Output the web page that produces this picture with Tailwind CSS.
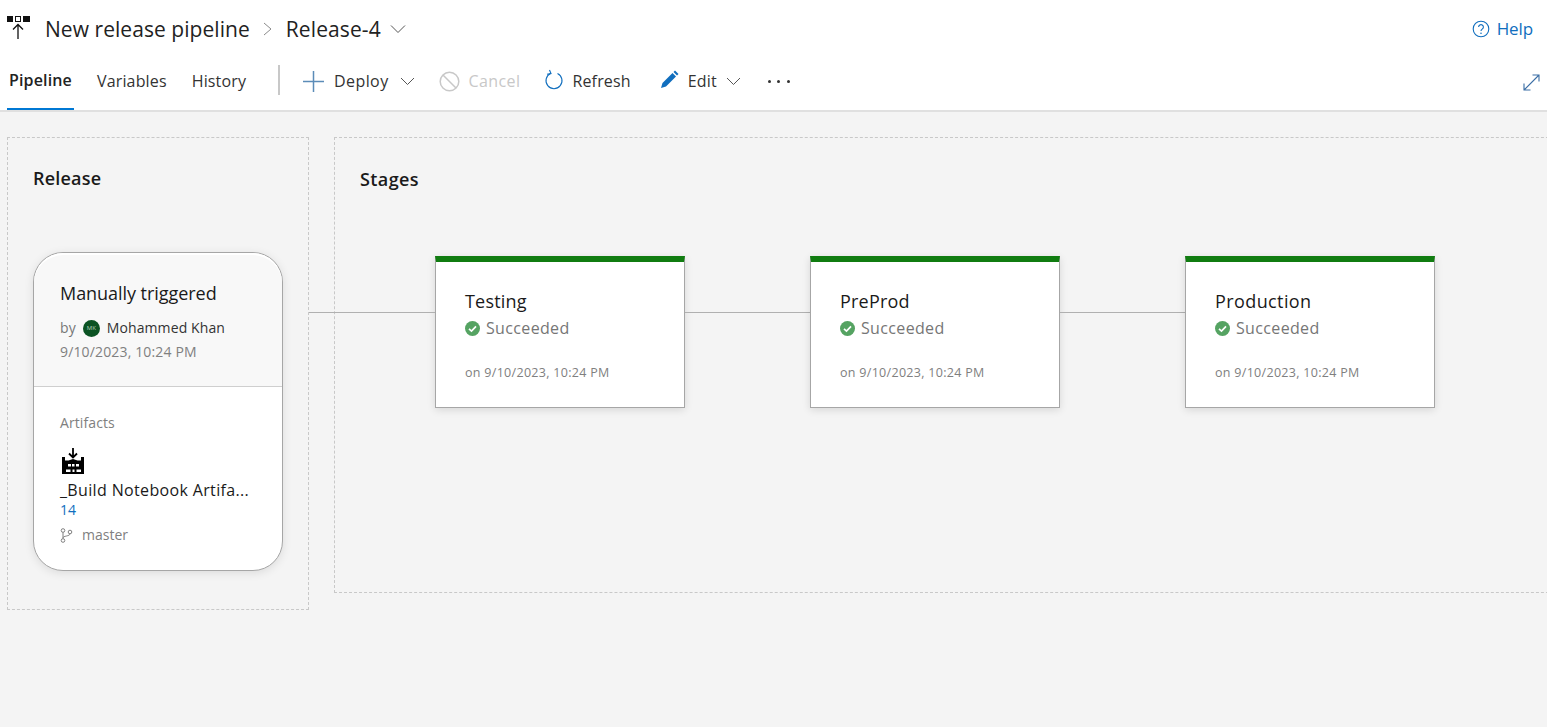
<!DOCTYPE html>
<html lang="en">
<head>
    <meta charset="UTF-8">
    <title>New release pipeline - Release-4</title>
    <script src="https://cdn.jsdelivr.net/npm/@tailwindcss/browser@4"></script>
</head>
<body class="h-[727px] w-[1547px] overflow-hidden bg-[#f4f4f4] font-['Open_Sans',sans-serif] text-[#1f1f1f]">

<!-- Header -->
<header class="h-[112px] bg-white border-b-2 border-[#e0e0e0] flex flex-col">
    <div class="h-[58px] flex items-center pl-[7px] pr-[14px]">
        <svg class="w-[24px] h-[26px] mr-[14px] -mt-[3px]" viewBox="0 0 24 26">
            <rect x="0" y="1" width="6" height="6" fill="#111"/>
            <rect x="8.5" y="1.5" width="5" height="5" fill="none" stroke="#111"/>
            <rect x="16" y="1" width="7" height="6" fill="#111"/>
            <path d="M11 24V10M6 14.5l5-5 5 5" fill="none" stroke="#111" stroke-width="1.3"/>
        </svg>
        <span class="mt-[2px] text-[21px] tracking-[0.05px] text-[#222]">New release pipeline</span>
        <svg class="w-[12px] h-[14px] ml-[12px] mr-[12px]" viewBox="0 0 12 14"><path d="M2 1l7 6-7 6" fill="none" stroke="#8a8a8a" stroke-width="1"/></svg>
        <span class="mt-[2px] text-[21px] tracking-[0.1px] text-[#222]">Release-4</span>
        <svg class="w-[16px] h-[10px] ml-[9px]" viewBox="0 0 16 10"><path d="M1 1.5l7 7 7-7" fill="none" stroke="#555" stroke-width="1"/></svg>
        <div class="ml-auto flex items-center gap-[7px] text-[#106ebe]">
            <svg class="w-[18px] h-[18px]" viewBox="0 0 18 18">
                <circle cx="9" cy="9" r="7.8" fill="none" stroke="#106ebe" stroke-width="1.1"/>
                <path d="M6.6 7a2.4 2.4 0 1 1 3.6 2.1c-.8.5-1.2.9-1.2 1.9" fill="none" stroke="#106ebe" stroke-width="1.1"/>
                <circle cx="9" cy="13.2" r=".8" fill="#106ebe"/>
            </svg>
            <span class="text-[17px] tracking-[-0.1px]">Help</span>
        </div>
    </div>
    <div class="flex-1 flex items-stretch pl-[7px] pr-[7px] text-[16px]">
        <a class="w-[67px] pb-[6px] flex items-center justify-center font-semibold tracking-[0.15px] border-b-2 border-[#0078d4] text-[#222]">Pipeline</a>
        <a class="ml-[23px] pb-[6px] flex items-center tracking-[0.15px] text-[#333]">Variables</a>
        <a class="ml-[25px] pb-[6px] flex items-center tracking-[0.15px] text-[#333]">History</a>
        <div class="ml-[32px] w-[2px] h-[30px] mt-[7px] bg-[#c8c8c8]"></div>
        <button class="ml-[23px] pb-[6px] flex items-center tracking-[0.4px] text-[#333]">
            <svg class="w-[21px] h-[21px] mr-[10px]" viewBox="0 0 21 21"><path d="M10.5 0v21M0 10.5h21" stroke="#5b8cb8" stroke-width="1.5" fill="none"/></svg>
            Deploy
            <svg class="w-[15px] h-[9px] ml-[11px]" viewBox="0 0 15 9"><path d="M1 1l6.500 6.500L14 1" fill="none" stroke="#555" stroke-width="1"/></svg>
        </button>
        <button class="ml-[24px] pb-[6px] flex items-center tracking-[0.4px] text-[#c8c8c8]">
            <svg class="w-[21px] h-[21px] mr-[9px]" viewBox="0 0 21 21"><circle cx="10.500" cy="10.500" r="9.300" fill="none" stroke="#c8c8c8" stroke-width="1.500"/><path d="M4 4l13 13" stroke="#c8c8c8" stroke-width="1.500"/></svg>
            Cancel
        </button>
        <button class="ml-[24px] pb-[6px] flex items-center tracking-[0.15px] text-[#333]">
            <svg class="w-[20px] h-[21px] mr-[8px] -mt-[3px]" viewBox="0 0 20 21"><path d="M6.500 4.500a8 8 0 1 0 7 0" fill="none" stroke="#106ebe" stroke-width="1.100"/><path d="M5.500 1l1.500 3.500-4 .7" fill="none" stroke="#106ebe" stroke-width="1.100"/></svg>
            Refresh
        </button>
        <button class="ml-[29px] pb-[6px] flex items-center tracking-[0.2px] text-[#333]">
            <svg class="w-[19px] h-[19px] mr-[9px] -mt-[3px]" viewBox="0 0 19 19"><path d="M1 18l1.500-5L12.500 3l3.500 3.500L6 16.500z" fill="#106ebe"/><path d="M13.500 2l1.500-1.500 3.500 3.500L17 5.500z" fill="#106ebe"/></svg>
            Edit
            <svg class="w-[15px] h-[9px] ml-[9px]" viewBox="0 0 15 9"><path d="M1 1l6.500 6.500L14 1" fill="none" stroke="#555" stroke-width="1"/></svg>
        </button>
        <button class="ml-[27px] pb-[6px] flex items-center gap-[6.500px]">
            <span class="w-[3px] h-[3px] rounded-full bg-[#333]"></span>
            <span class="w-[3px] h-[3px] rounded-full bg-[#333]"></span>
            <span class="w-[3px] h-[3px] rounded-full bg-[#333]"></span>
        </button>
        <button class="ml-auto flex items-center pb-[4px]">
            <svg class="w-[17px] h-[17px]" viewBox="0 0 17 17"><path d="M1 16L16 1M9.500 1H16v6.500M1 9.500V16h6.500" fill="none" stroke="#3b6ea5" stroke-width="1.100"/></svg>
        </button>
    </div>
</header>

<!-- Pipeline canvas -->
<main class="flex items-start pl-[7px] pt-[25px]">
    <!-- Release -->
    <section class="w-[302px] h-[473px] shrink-0 border border-dashed border-[#c8c8c8] pl-[25px] pt-[25px]">
        <h2 class="text-[18px] font-semibold leading-[30px] tracking-[0.2px] text-[#1a1a1a]">Release</h2>
        <div class="relative mt-[59px] w-[250px] h-[319px] rounded-[30px] border border-[#a6a6a6] bg-white shadow-[0_2px_10px_rgba(0,0,0,0.1)]">
            <div class="absolute left-[275px] top-[59px] w-[126px] h-[1px] bg-[#b0b0b0]"></div>
            <div class="h-[134px] rounded-t-[30px] border-t-2 border-white bg-[#f8f8f8] border-b border-b-[#cfcfcf] pl-[26px] pt-[25px]">
                <div class="text-[18px] leading-[26px] tracking-[-0.05px] text-[#1a1a1a]">Manually triggered</div>
                <div class="mt-[12px] flex items-center text-[14px] leading-[20px] tracking-[0.1px]">
                    <span class="text-[#777]">by</span>
                    <span class="ml-[7px] w-[17px] h-[17px] rounded-full bg-[#0b5323] text-[#b5d2bd] text-[6px] tracking-normal flex items-center justify-center">MK</span>
                    <span class="ml-[7px] text-[#333]">Mohammed Khan</span>
                </div>
                <div class="mt-[4px] text-[14px] leading-[20px] tracking-[0.15px] text-[#808080]">9/10/2023, 10:24 PM</div>
            </div>
            <div class="pl-[26px] pt-[26px]">
                <div class="text-[14px] leading-[20px] tracking-[0.1px] text-[#808080]">Artifacts</div>
                <svg class="mt-[15px] ml-[1px] w-[24px] h-[27px]" viewBox="0 0 24 27">
                    <path d="M12 0v9M8 5.500l4 4 4-4" fill="none" stroke="#000" stroke-width="1.800"/>
                    <path d="M1 9h3v3.500h3.500L12 11l4.500 1.500H20V9h3v17H1z" fill="#000"/>
                    <path d="M7 16h3v2.500H7zM11 16h2.500v2.500H11zM15 16h3v2.500h-3zM5 21.500h4.500V24H5zM11.500 21.500h2V24h-2zM15.500 21.500H20V24h-4.500z" fill="#fff"/>
                </svg>
                <div class="text-[16px] leading-[22px] tracking-[0.35px] text-[#1a1a1a] mt-[4px]">_Build Notebook Artifa...</div>
                <div class="text-[14px] leading-[20px] -mt-[1px] text-[#106ebe]">14</div>
                <div class="mt-[5px] flex items-center text-[14px] leading-[20px] text-[#808080]">
                    <svg class="w-[13px] h-[15px] mr-[9px]" viewBox="0 0 13 15" fill="none" stroke="#808080" stroke-width="1">
                        <circle cx="3" cy="2.500" r="1.800"/><circle cx="3" cy="12.500" r="1.800"/><circle cx="10" cy="4" r="1.800"/>
                        <path d="M3 4.300v6.400M10 5.800c0 2.500-7 2-7 4"/>
                    </svg>
                    master
                </div>
            </div>
        </div>
    </section>

    <!-- Stages -->
    <section class="ml-[25px] w-[1240px] h-[456px] shrink-0 border border-dashed border-[#c8c8c8] pl-[25px] pt-[26px]">
        <h2 class="text-[18px] font-semibold leading-[30px] tracking-[0.4px] text-[#1a1a1a]">Stages</h2>
        <div class="mt-[62px] ml-[75px] flex items-start">
            <article class="w-[250px] h-[152px] shrink-0 bg-white border border-[#a6a6a6] border-t-[6px] border-t-[#107c10] shadow-[0_2px_8px_rgba(0,0,0,0.12)] pl-[29px] pt-[26px]">
                <div class="text-[18px] leading-[26px] tracking-[0.2px] text-[#1a1a1a]">Testing</div>
                <div class="mt-[1px] flex items-center gap-[6px] text-[16px] leading-[26px] tracking-[0.35px] text-[#767676]">
                    <svg class="w-[15px] h-[15px]" viewBox="0 0 15 15"><circle cx="7.500" cy="7.500" r="7.500" fill="#55a362"/><path d="M4 7.800l2.500 2.300L11 5.300" fill="none" stroke="#fff" stroke-width="1.700"/></svg>
                    Succeeded
                </div>
                <div class="mt-[23px] text-[12.500px] leading-[18px] text-[#808080] tracking-[0.3px]">on 9/10/2023, 10:24 PM</div>
            </article>
            <div class="w-[125px] h-[1px] mt-[56px] shrink-0 bg-[#b0b0b0]"></div>
            <article class="w-[250px] h-[152px] shrink-0 bg-white border border-[#a6a6a6] border-t-[6px] border-t-[#107c10] shadow-[0_2px_8px_rgba(0,0,0,0.12)] pl-[29px] pt-[26px]">
                <div class="text-[18px] leading-[26px] tracking-[0.2px] text-[#1a1a1a]">PreProd</div>
                <div class="mt-[1px] flex items-center gap-[6px] text-[16px] leading-[26px] tracking-[0.35px] text-[#767676]">
                    <svg class="w-[15px] h-[15px]" viewBox="0 0 15 15"><circle cx="7.500" cy="7.500" r="7.500" fill="#55a362"/><path d="M4 7.800l2.500 2.300L11 5.300" fill="none" stroke="#fff" stroke-width="1.700"/></svg>
                    Succeeded
                </div>
                <div class="mt-[23px] text-[12.500px] leading-[18px] text-[#808080] tracking-[0.3px]">on 9/10/2023, 10:24 PM</div>
            </article>
            <div class="w-[125px] h-[1px] mt-[56px] shrink-0 bg-[#b0b0b0]"></div>
            <article class="w-[250px] h-[152px] shrink-0 bg-white border border-[#a6a6a6] border-t-[6px] border-t-[#107c10] shadow-[0_2px_8px_rgba(0,0,0,0.12)] pl-[29px] pt-[26px]">
                <div class="text-[18px] leading-[26px] tracking-[0.4px] text-[#1a1a1a]">Production</div>
                <div class="mt-[1px] flex items-center gap-[6px] text-[16px] leading-[26px] tracking-[0.35px] text-[#767676]">
                    <svg class="w-[15px] h-[15px]" viewBox="0 0 15 15"><circle cx="7.500" cy="7.500" r="7.500" fill="#55a362"/><path d="M4 7.800l2.500 2.300L11 5.300" fill="none" stroke="#fff" stroke-width="1.700"/></svg>
                    Succeeded
                </div>
                <div class="mt-[23px] text-[12.500px] leading-[18px] text-[#808080] tracking-[0.3px]">on 9/10/2023, 10:24 PM</div>
            </article>
        </div>
    </section>
</main>
</body>
</html>
